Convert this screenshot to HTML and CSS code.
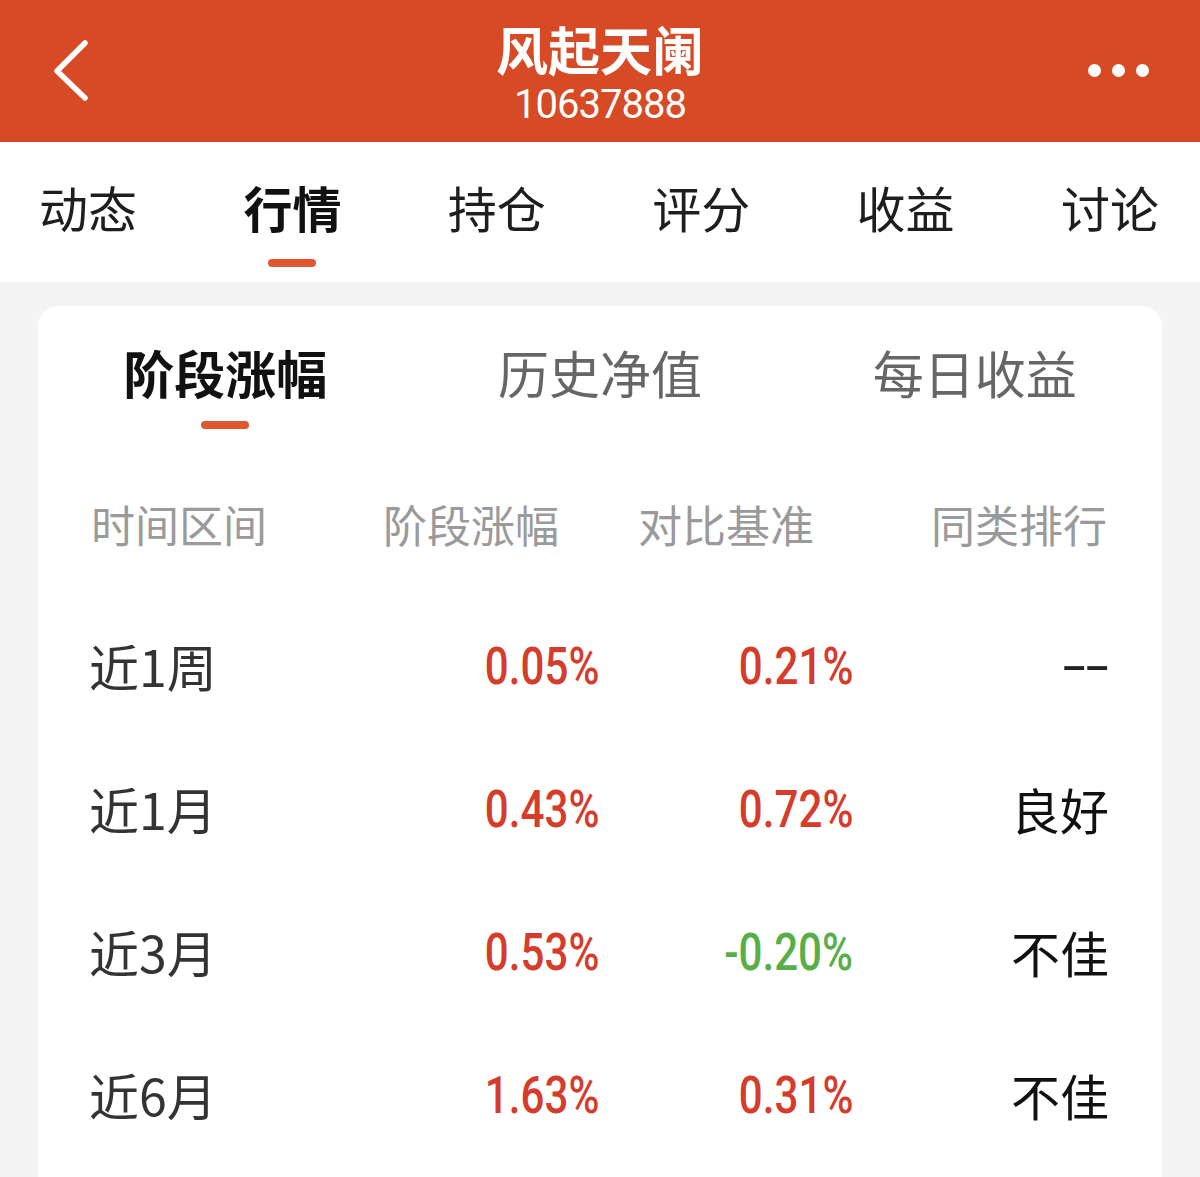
FILE: index.html
```html
<!DOCTYPE HTML>
<html>
<head>
<meta http-equiv="Content-Type" content="text/html; charset=utf-8">
<title>风起天阑</title>
<link rel="stylesheet" href="styles.css">
</head>

<body>
<header class="topbar">
	<a class="back" href="#">
		<svg width="40" height="70" viewBox="0 0 40 70">
			<polyline points="33,3 5,31 33,58" fill="none" stroke="#fff" stroke-width="5.5" stroke-linecap="round" stroke-linejoin="round"/>
		</svg>
	</a>
	<div class="title">
		<h1>风起天阑</h1>
		<p>10637888</p>
	</div>
	<div class="more">
		<i></i><i></i><i></i>
	</div>
</header>

<nav class="tabs">
	<a href="#">动态</a>
	<a href="#" class="on">行情</a>
	<a href="#">持仓</a>
	<a href="#">评分</a>
	<a href="#">收益</a>
	<a href="#">讨论</a>
</nav>

<section class="card">
	<div class="subtabs">
		<a href="#" class="on">阶段涨幅</a>
		<a href="#">历史净值</a>
		<a href="#">每日收益</a>
	</div>

	<div class="thead">
		<span>时间区间</span>
		<span>阶段涨幅</span>
		<span>对比基准</span>
		<span>同类排行</span>
	</div>

	<div class="row">
		<span class="label">近1周</span>
		<span class="num up"><b>0.05%</b></span>
		<span class="num up"><b>0.21%</b></span>
		<span class="num none"><b>--</b></span>
	</div>
	<div class="row">
		<span class="label">近1月</span>
		<span class="num up"><b>0.43%</b></span>
		<span class="num up"><b>0.72%</b></span>
		<span class="rank">良好</span>
	</div>
	<div class="row">
		<span class="label">近3月</span>
		<span class="num up"><b>0.53%</b></span>
		<span class="num down"><b>-0.20%</b></span>
		<span class="rank">不佳</span>
	</div>
	<div class="row">
		<span class="label">近6月</span>
		<span class="num up"><b>1.63%</b></span>
		<span class="num up"><b>0.31%</b></span>
		<span class="rank">不佳</span>
	</div>
</section>
</body>
</html>
```

FILE: styles.css
```css
*{
	margin: 0;
	padding: 0;
	box-sizing: border-box;
}

html, body{
	height: 100%;
}

body{
	background-color: #f4f4f4;
	font-family: "Noto Sans CJK SC", "Noto Sans", sans-serif;
	color: #222;
	overflow: hidden;
}

a{
	color: inherit;
	text-decoration: none;
}

/* 顶部标题栏 */
.topbar{
	height: 142px;
	background-color: #d64a25;
	display: grid;
	grid-template-columns: 200px 1fr 200px;
	color: #fff;
}
.topbar .back{
	padding: 40px 0 0 52px;
}
.topbar .title{
	text-align: center;
	padding-top: 24px;
}
.topbar h1{
	font-size: 52px;
	line-height: 50px;
	font-weight: bold;
}
.topbar p{
	margin-top: 11px;
	font-family: Roboto, sans-serif;
	font-size: 40px;
	line-height: 40px;
	letter-spacing: -1px;
}
.topbar .more{
	display: flex;
	justify-content: flex-end;
	gap: 11px;
	padding: 64px 51px 0 0;
}
.topbar .more i{
	width: 13px;
	height: 13px;
	border-radius: 50%;
	background-color: #fff;
}

/* 主tab */
.tabs{
	height: 140px;
	background-color: #fff;
	display: flex;
	justify-content: space-between;
	padding: 41px 41px 0 39px;
}
.tabs a{
	display: flex;
	flex-direction: column;
	align-items: center;
	font-size: 49px;
	line-height: 48px;
	color: #1e1e1e;
}
.tabs a.on{
	font-weight: bold;
	color: #111;
}
.tabs a.on::after{
	content: '';
	width: 48px;
	height: 8px;
	margin-top: 28px;
	border-radius: 4px;
	background-color: #e0562f;
}

/* 卡片 */
.card{
	margin: 24px 38px 0;
	background-color: #fff;
	border-radius: 20px 20px 0 0;
	min-height: 900px;
}
.subtabs{
	display: grid;
	grid-template-columns: repeat(3, 1fr);
	padding-top: 38px;
	height: 123px;
}
.subtabs a{
	display: flex;
	flex-direction: column;
	align-items: center;
	font-size: 51px;
	line-height: 56px;
	color: #666;
}
.subtabs a.on{
	font-weight: bold;
	color: #111;
}
.subtabs a.on::after{
	content: '';
	width: 48px;
	height: 8px;
	margin-top: 21px;
	border-radius: 4px;
	background-color: #e0562f;
}

.thead,
.row{
	display: grid;
	align-items: center;
	height: 143px;
	margin: 0 53px;
}
.thead{
	grid-template-columns: 292px 255px 293px 1fr;
	font-size: 44px;
	color: #9a9a9a;
	white-space: nowrap;
	margin-top: 23px;
}
.row{
	grid-template-columns: 1fr 200px 254px 256px;
}
.row .label{
	font-size: 50px;
	color: #333;
	margin-left: -2px;
	margin-top: -4px;
}
.row .num,
.row .rank{
	text-align: right;
}
.row .num b{
	display: inline-block;
	font-family: Roboto, sans-serif;
	font-weight: 500;
	font-size: 52px;
	transform: scaleX(0.81);
	transform-origin: right center;
}
.row .up{
	color: #d43c2c;
}
.row .down{
	color: #5aae4a;
}
.row .none{
	color: #222;
}
.row .none b{
	font-weight: 400;
	transform: scaleX(1.6);
}
.row .rank{
	font-size: 49px;
	color: #111;
	margin-top: -2px;
}
```
